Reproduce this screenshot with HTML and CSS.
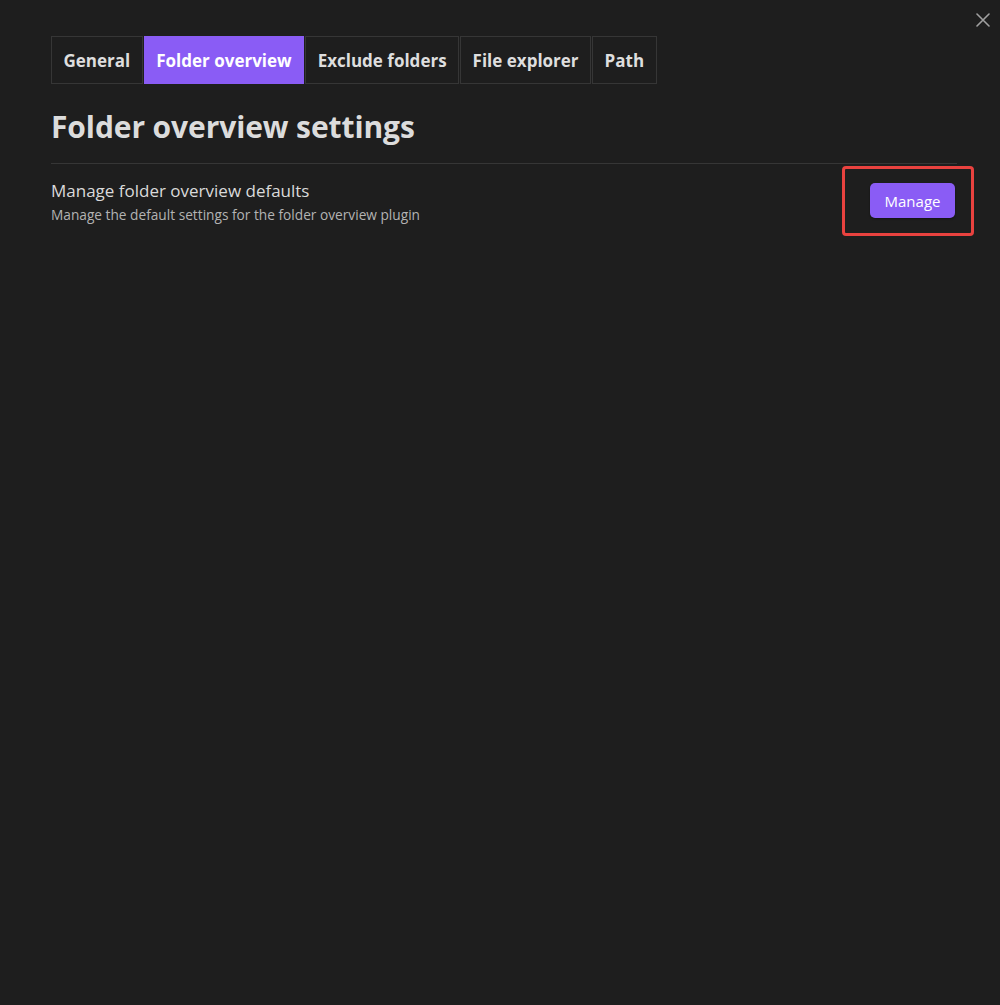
FILE: index.html
```html
<!DOCTYPE html>
<html>
<head>
<meta charset="utf-8">
<link rel="stylesheet" href="styles.css">
</head>
<body>
<div class="modal">
  <button class="close" aria-label="Close">
    <svg width="14" height="14" viewBox="0 0 14 14"><path d="M1 1L13 13M13 1L1 13" stroke="#a0a0a0" stroke-width="1.6" stroke-linecap="round"/></svg>
  </button>
  <div class="content">
    <nav class="tabs">
      <div class="tab">General</div>
      <div class="tab active">Folder overview</div>
      <div class="tab">Exclude folders</div>
      <div class="tab">File explorer</div>
      <div class="tab">Path</div>
    </nav>
    <h2 class="title">Folder overview settings</h2>
    <div class="setting">
      <div class="info">
        <div class="name">Manage folder overview defaults</div>
        <div class="desc">Manage the default settings for the folder overview plugin</div>
      </div>
      <div class="control">
        <button class="btn">Manage</button>
        <div class="highlight"></div>
      </div>
    </div>
  </div>
</div>
</body>
</html>
```
FILE: styles.css
```css
html, body {
  margin: 0;
  padding: 0;
  background: #1e1e1e;
  height: 100%;
}
body {
  font-family: "Open Sans", "Liberation Sans", sans-serif;
  color: #dadada;
}
.modal {
  position: relative;
  height: 100%;
}
.close {
  position: absolute;
  top: 12px;
  right: 9px;
  width: 16px;
  height: 16px;
  padding: 0;
  border: 0;
  background: none;
  display: flex;
  align-items: center;
  justify-content: center;
}
.content {
  padding: 36px 43px 0 51px;
}
.tabs {
  display: flex;
}
.tab {
  height: 46px;
  border: 1px solid #363636;
  margin-right: 1px;
  padding: 0 11.5px;
  display: flex;
  align-items: center;
  font-weight: 700;
  font-size: 17px;
  color: #dedede;
  background: #1e1e1e;
}
.tab.active {
  background: #8a5cf5;
  border-color: #8a5cf5;
  color: #ffffff;
}
.title {
  margin: 22px 0 0;
  font-size: 30px;
  line-height: 42px;
  font-weight: 700;
  color: #dcdcdc;
  letter-spacing: -0.1px;
}
.setting {
  margin-top: 15px;
  border-top: 1px solid #363636;
  display: flex;
  align-items: center;
  justify-content: space-between;
  padding: 16px 2px 0 0;
}
.name {
  font-size: 17px;
  line-height: 22px;
  color: #dadada;
}
.desc {
  font-size: 13.7px;
  line-height: 18px;
  color: #b3b3b3;
  margin-top: 4px;
}
.control {
  position: relative;
  margin-top: -3px;
}
.btn {
  font-family: inherit;
  font-size: 15px;
  font-weight: 500;
  color: #ffffff;
  background: #8a5cf5;
  border: 0;
  border-radius: 5px;
  height: 35px;
  width: 85px;
  padding: 0;
  box-shadow: 0 1px 2px rgba(0,0,0,0.4);
}
.highlight {
  position: absolute;
  left: -28px;
  top: -17px;
  right: -19px;
  bottom: -18px;
  border: 3px solid #e9423f;
  border-radius: 4px;
  pointer-events: none;
}
```
